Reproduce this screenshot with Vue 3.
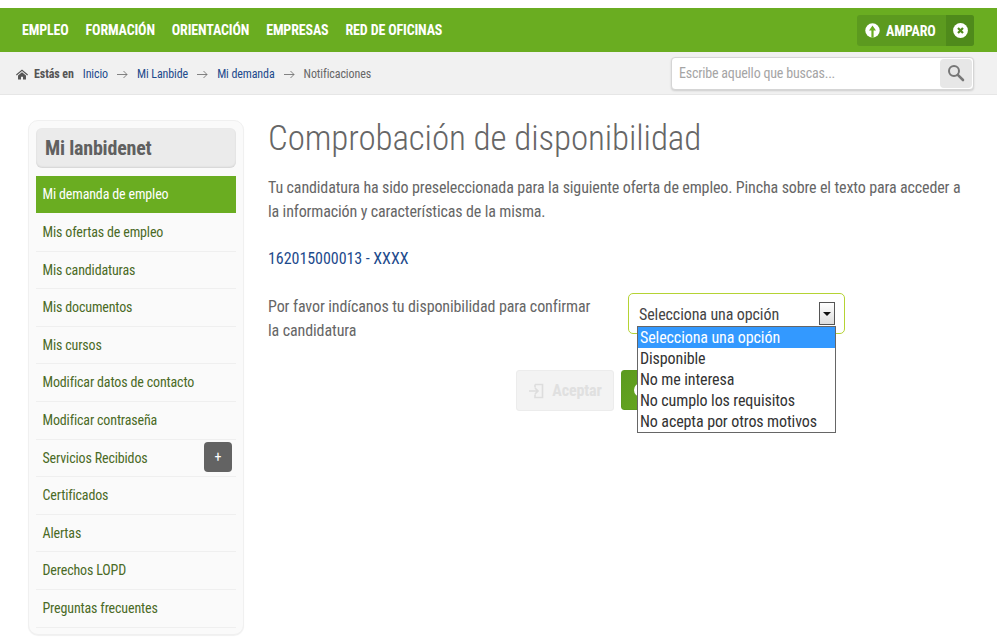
<script setup>
const navItems = ["EMPLEO", "FORMACIÓN", "ORIENTACIÓN", "EMPRESAS", "RED DE OFICINAS"];
const crumbs = ["Inicio", "Mi Lanbide", "Mi demanda"];
const menuItems = [
  "Mi demanda de empleo",
  "Mis ofertas de empleo",
  "Mis candidaturas",
  "Mis documentos",
  "Mis cursos",
  "Modificar datos de contacto",
  "Modificar contraseña",
  "Servicios Recibidos",
  "Certificados",
  "Alertas",
  "Derechos LOPD",
  "Preguntas frecuentes",
];
const options = [
  "Selecciona una opción",
  "Disponible",
  "No me interesa",
  "No cumplo los requisitos",
  "No acepta por otros motivos",
];
</script>

<template>
  <div class="page">
    <header class="topbar">
      <nav class="topnav">
        <a v-for="item in navItems" :key="item">{{ item }}</a>
      </nav>
      <div class="user">
        <span class="user__name">
          <svg width="15" height="15" viewBox="0 0 15 15">
            <circle cx="7.5" cy="7.5" r="7.2" fill="#fff" />
            <path d="M7.5 2.4 L11 7.4 H8.6 V14.7 H6.4 V7.4 H4 Z" fill="#6aad21" />
          </svg>
          AMPARO
        </span>
        <span class="user__close">
          <svg width="15" height="15" viewBox="0 0 15 15">
            <circle cx="7.5" cy="7.5" r="7.4" fill="#fff" />
            <path d="M5 5 L10 10 M10 5 L5 10" stroke="#4f8a1b" stroke-width="2.2" />
          </svg>
        </span>
      </div>
    </header>

    <div class="crumbbar">
      <div class="crumbs">
        <svg class="home" width="12" height="11" viewBox="0 0 13 11">
          <path d="M6.5 0 L13 5.6 L12.2 6.5 L6.5 1.7 L0.8 6.5 L0 5.6 Z M2.2 6.6 L6.5 3 L10.8 6.6 V11 H7.6 V8 H5.4 V11 H2.2 Z" fill="#555" />
        </svg>
        <strong>Estás en</strong>
        <template v-for="crumb in crumbs" :key="crumb">
          <a>{{ crumb }}</a>
          <svg class="arrow" width="11" height="9" viewBox="0 0 11 9">
            <path d="M0 4.5 H10 M6.5 1 L10 4.5 L6.5 8" fill="none" stroke="#666" stroke-width="0.8" />
          </svg>
        </template>
        <span>Notificaciones</span>
      </div>
      <div class="search">
        <span class="search__text">Escribe aquello que buscas...</span>
        <span class="search__btn">
          <svg width="18" height="18" viewBox="0 0 18 18">
            <circle cx="7" cy="7" r="5" fill="none" stroke="#777" stroke-width="2" />
            <path d="M10.8 10.8 L16 16" stroke="#777" stroke-width="2.6" stroke-linecap="round" />
          </svg>
        </span>
      </div>
    </div>

    <div class="body">
      <aside class="sidebar">
        <h2>Mi lanbidenet</h2>
        <ul>
          <li v-for="(item, i) in menuItems" :key="item" :class="{ active: i === 0 }">
            {{ item }}
            <span v-if="item === 'Servicios Recibidos'" class="plus">+</span>
          </li>
        </ul>
      </aside>

      <main class="content">
        <h1>Comprobación de disponibilidad</h1>
        <p class="intro">
          Tu candidatura ha sido preseleccionada para la siguiente oferta de empleo. Pincha sobre el texto para acceder a
          la información y características de la misma.
        </p>
        <a class="offer">162015000013 - XXXX</a>
        <div class="row">
          <p class="question">Por favor indícanos tu disponibilidad para confirmar la candidatura</p>
          <div class="selectbox">
            <div class="select-value">
              Selecciona una opción
              <span class="select-arrow"></span>
            </div>
            <ul class="dropdown">
              <li v-for="(opt, i) in options" :key="opt" :class="{ selected: i === 0 }">{{ opt }}</li>
            </ul>
          </div>
        </div>
        <div class="actions">
          <button class="btn btn--off" disabled>
            <svg width="16" height="16" viewBox="0 0 16 16">
              <path d="M7 1.5 H14.5 V14.5 H7 V11.5 M7 4.5 V1.5 M1 8 H10 M7 5 L10 8 L7 11" fill="none" stroke="#ddd" stroke-width="1.6" />
            </svg>
            Aceptar
          </button>
          <button class="btn btn--go">
            <svg width="14" height="14" viewBox="0 0 14 14">
              <circle cx="7" cy="7" r="7" fill="#fff" />
            </svg>
          </button>
        </div>
      </main>
    </div>
  </div>
</template>

<style scoped>
.page {
  width: 997px;
  height: 640px;
  overflow: hidden;
  padding-top: 8px;
  box-sizing: border-box;
  font-family: Roboto, "Liberation Sans", sans-serif;
  font-stretch: 75%;
  color: #666;
}

.topbar {
  height: 44px;
  background: #6aad21;
  display: flex;
  justify-content: space-between;
  align-items: center;
  padding: 0 23px 0 22px;
}

.topnav {
  display: flex;
  gap: 17px;
}

.topnav a {
  color: #fff;
  font-size: 14px;
  font-weight: 700;
  letter-spacing: -0.15px;
}

.user {
  display: flex;
  height: 31px;
  margin-top: 1px;
  background: #5c9a1f;
  border-radius: 3px;
}

.user__name {
  display: flex;
  align-items: center;
  gap: 6px;
  width: 89px;
  box-sizing: border-box;
  padding-left: 8px;
  color: #fff;
  font-size: 14px;
  font-weight: 700;
  letter-spacing: -0.1px;
}

.user__close {
  width: 28px;
  display: flex;
  align-items: center;
  justify-content: center;
  background: #4f8a1b;
  border-radius: 0 3px 3px 0;
}

.crumbbar {
  height: 42px;
  background: #f1f1f1;
  border-bottom: 1px solid #e6e6e6;
  display: flex;
  justify-content: space-between;
  align-items: center;
  padding: 0 23px 0 16px;
}

.crumbs {
  display: flex;
  align-items: center;
  padding-top: 2px;
  font-size: 12px;
  letter-spacing: -0.1px;
  color: #666;
}

.crumbs strong {
  margin: 0 9px 0 6px;
  font-weight: 700;
  color: #555;
}

.crumbs a {
  color: #1d4a8c;
}

.arrow {
  margin: 0 9px;
}

.search {
  width: 303px;
  height: 33px;
  box-sizing: border-box;
  background: #fff;
  border: 1px solid #d5d5d5;
  border-radius: 4px;
  box-shadow: 0 1px 2px rgba(0, 0, 0, 0.15);
  display: flex;
  justify-content: space-between;
  align-items: center;
  padding: 0 1px 0 7px;
}

.search__text {
  color: #a5a5a5;
  font-size: 14px;
  letter-spacing: -0.2px;
}

.search__btn {
  width: 32px;
  height: 29px;
  background: #e7e7e7;
  border-radius: 4px;
  display: flex;
  align-items: center;
  justify-content: center;
}

.body {
  display: flex;
  padding: 25px 0 0 28px;
}

.sidebar {
  width: 216px;
  height: 515px;
  flex: none;
  box-sizing: border-box;
  padding: 7px;
  background: #fafafa;
  border: 1px solid #f0f0f0;
  border-radius: 10px;
  box-shadow: 0 1px 1px rgba(0, 0, 0, 0.06);
}

.sidebar h2 {
  height: 40px;
  margin: 0 0 8px;
  padding-left: 9px;
  line-height: 40px;
  font-size: 20px;
  font-weight: 700;
  letter-spacing: -0.2px;
  color: #606060;
  background: #ebebeb;
  border-radius: 6px;
  box-shadow: inset 0 -1px 2px rgba(0, 0, 0, 0.1);
}

.sidebar ul {
  list-style: none;
  margin: 0;
  padding: 0;
}

.sidebar li {
  position: relative;
  height: 37.6px;
  box-sizing: border-box;
  padding-left: 6.5px;
  line-height: 37px;
  font-size: 14px;
  letter-spacing: -0.15px;
  color: #4a6a26;
  border-bottom: 1px solid #efefef;
}

.sidebar li.active {
  height: 37px;
  margin-bottom: 1px;
  background: #6aad21;
  color: #fff;
  line-height: 36px;
  border-bottom: 0;
}

.plus {
  position: absolute;
  top: 2.4px;
  right: 4px;
  width: 28px;
  height: 30px;
  line-height: 30px;
  text-align: center;
  color: #fff;
  background: #636363;
  border-radius: 4px;
}

.content {
  width: 700px;
  margin-left: 24px;
}

.content h1 {
  margin: 0;
  height: 38px;
  line-height: 38px;
  font-size: 35px;
  font-weight: 300;
  letter-spacing: -0.1px;
  color: #666;
}

.intro {
  margin: 18px 0 0;
  font-size: 16px;
  letter-spacing: -0.13px;
  line-height: 24px;
  color: #666;
}

.offer {
  display: block;
  margin-top: 23px;
  font-size: 16px;
  letter-spacing: -0.05px;
  line-height: 24px;
  color: #1d4a8c;
}

.row {
  display: flex;
  margin-top: 24px;
}

.question {
  width: 330px;
  margin: 0;
  font-size: 16px;
  letter-spacing: -0.1px;
  line-height: 24px;
}

.selectbox {
  position: relative;
  width: 217px;
  height: 41px;
  margin-left: 30px;
  margin-top: -2px;
  box-sizing: border-box;
  border: 1px solid #b5d334;
  border-radius: 5px;
}

.select-value {
  padding: 11px 0 0 10px;
  font-size: 16px;
  letter-spacing: -0.1px;
  color: #444;
}

.select-arrow {
  position: absolute;
  top: 8px;
  right: 9px;
  width: 16px;
  height: 23px;
  box-sizing: border-box;
  border: 1px solid #555;
  background: linear-gradient(#fff, #ddd);
}

.select-arrow::after {
  content: "";
  position: absolute;
  left: 3px;
  top: 9px;
  border: 4px solid transparent;
  border-top: 4px solid #111;
}

.dropdown {
  position: absolute;
  left: 8px;
  top: 32px;
  width: 199px;
  box-sizing: border-box;
  margin: 0;
  padding: 0;
  list-style: none;
  background: #fff;
  border: 1px solid #666;
  font-size: 16px;
  letter-spacing: -0.1px;
  color: #333;
}

.dropdown li {
  height: 21px;
  line-height: 21px;
  padding-left: 2px;
}

.dropdown li.selected {
  background: #3399ff;
  color: #fff;
}

.actions {
  display: flex;
  gap: 7px;
  margin: 27px 0 0 248px;
}

.btn {
  height: 41px;
  border-radius: 3px;
  font-family: inherit;
  font-stretch: inherit;
  font-size: 16px;
  font-weight: 700;
  letter-spacing: -0.1px;
  display: flex;
  align-items: center;
  justify-content: center;
  gap: 8px;
}

.btn--off {
  width: 98px;
  background: #f3f3f3;
  border: 1px solid #ececec;
  color: #e0e0e0;
}

.btn--go {
  width: 110px;
  height: 40px;
  padding: 0 0 0 12px;
  justify-content: flex-start;
  background: linear-gradient(135deg, #5c9a1f, #6fb521);
  border: 1px solid #5c9a1f;
}
</style>
